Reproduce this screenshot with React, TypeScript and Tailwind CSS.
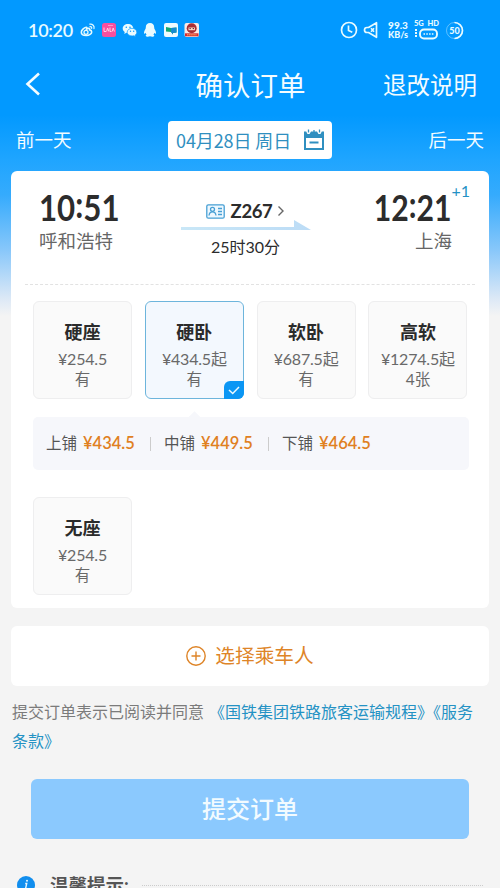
import { useState } from 'react';
import clsx from 'clsx';

interface Seat {
  name: string;
  price: string;
  left: string;
}

const seats: Seat[] = [
  { name: '硬座', price: '¥254.5', left: '有' },
  { name: '硬卧', price: '¥434.5起', left: '有' },
  { name: '软卧', price: '¥687.5起', left: '有' },
  { name: '高软', price: '¥1274.5起', left: '4张' },
];

const noSeat: Seat = { name: '无座', price: '¥254.5', left: '有' };

const berths = [
  { label: '上铺', price: '¥434.5' },
  { label: '中铺', price: '¥449.5' },
  { label: '下铺', price: '¥464.5' },
];

function NotificationIcons() {
  return (
    <svg width="120" height="16" viewBox="0 0 120 16" className="ml-[7px] shrink-0">
      {/* weibo */}
      <g fill="none" stroke="#e4faff" strokeLinecap="round">
        <path d="M6.2 5.2C4 5.7 1.3 8 1.3 10.2c0 2 2.2 3.3 5 3.3 3 0 5.4-1.7 5.4-3.6 0-1.2-1-1.8-2-2 .4-1.3-.5-2.1-3-1 .3-1 .2-1.6-.5-1.7z" strokeWidth="1.6" />
        <circle cx="6" cy="10.3" r="2" strokeWidth="1.3" />
        <path d="M9.8 2.2c2.7-.5 4.9 1.8 4.2 4.4M10 4.6c1.2-.2 2 .7 1.7 1.8" strokeWidth="1.2" />
      </g>
      {/* pink app */}
      <rect x="22" y="1" width="14" height="14" rx="2.5" fill="#f94f9f" />
      <path d="M24 5.5v4h2M26.6 9.5l1-3.5 1.2 3.5M30 5.5v4h1.5M32.2 9.5l1-3.5 1.2 3.5" stroke="#ffd2e6" strokeWidth="1" fill="none" />
      <path d="M28 3.5h5" stroke="#ff9ac7" strokeWidth="1" />
      {/* wechat */}
      <path d="M48 2c-3 0-5.3 2-5.3 4.5 0 1.5.8 2.7 2 3.5l-.4 1.9 2.1-1.1c.5.2 1 .2 1.6.2C51 11 53.3 9 53.3 6.5S51 2 48 2z" fill="#eafbff" />
      <path d="M52 6.3c2.7 0 4.8 1.8 4.8 4 0 1.2-.7 2.2-1.7 2.9l.3 1.4-1.7-.9c-.5.2-1.1.2-1.7.2-2.7 0-4.8-1.6-4.8-3.7s2.1-3.9 4.8-3.9z" fill="#eafbff" stroke="#0c9bff" strokeWidth=".7" />
      <g fill="#0c9bff">
        <circle cx="46.3" cy="5.3" r=".8" />
        <circle cx="50" cy="5.3" r=".8" />
        <circle cx="50.5" cy="9.3" r=".7" />
        <circle cx="53.7" cy="9.3" r=".7" />
      </g>
      {/* qq */}
      <path d="M70 1c-2.7 0-4.2 1.9-4.2 4.3 0 1.2-.3 1.7-.9 2.7-.8 1.3-1 2.6-.8 3.5.4.5 1-.2 1.4-.8.2.8.6 1.400 1.200 1.900-.7.3-1.100.8-.9 1.500.5 1 3 .8 4.200.2 1.200.6 3.700.8 4.200-.2.2-.7-.2-1.200-.9-1.500.6-.5 1-1.100 1.200-1.900.4.600 1 1.300 1.400.8.2-.9 0-2.200-.8-3.500-.6-1-.9-1.500-.9-2.700C74.200 2.900 72.700 1 70 1z" fill="#eafbff" />
      {/* mail card */}
      <rect x="84" y="1" width="14" height="14" rx="2" fill="#eefaff" />
      <path d="M86 5l5 1 5.5-.5v5L93 11v1.5L91 10l-5-.5z" fill="#12a873" />
      <path d="M91 6l5.5-.5v5l-3.5.5v1.5L91 10z" fill="#168bd0" />
      {/* red avatar */}
      <rect x="104.5" y="1" width="14.5" height="14" rx="2" fill="#fbe9e5" />
      <circle cx="111.7" cy="6.3" r="5" fill="#a62e36" />
      <path d="M108.5 5.500h6.400v2.700h-6.400z" fill="#ffd9c6" />
      <path d="M109.5 6.600h1.300m1.900 0h1.300" stroke="#4b2224" />
      <path d="M105 11.300h13.500v3H105z" fill="#d52c31" />
      <path d="M107 12.800h9.500" stroke="#f6bd68" strokeDasharray="1.5 .6" />
    </svg>
  );
}

function StatusBar() {
  return (
    <div className="flex h-[60px] items-center pr-[36px] pl-[28px] text-[#e9fbff]">
      <span className="w-[45px] text-[18px] leading-none font-semibold tracking-[-0.3px]">10:20</span>
      <NotificationIcons />
      <div className="ml-auto flex items-center">
        <svg width="18" height="18" viewBox="0 0 18 18" fill="none" stroke="currentColor" strokeWidth="1.7">
          <circle cx="9" cy="9" r="7.5" />
          <path d="M8.5 4.5v5l3.8 1.7" />
        </svg>
        <svg width="17" height="18" viewBox="0 0 17 18" fill="none" stroke="currentColor" strokeWidth="1.7" strokeLinejoin="round" className="ml-[5px]">
          <path d="M5.5 6.5L13.500 1.700v14.600L5.500 11.500H4a2.500 2.500 0 0 1 0-5z" />
          <path d="M8 7.200l3 3.600M11 7.200l-3 3.600" strokeWidth="1.6" />
        </svg>
        <div className="ml-[6px] w-[24px] text-center text-[9px] leading-[10px] font-black whitespace-nowrap">
          <div className="text-[10px] leading-[10px]">99.3</div>
          <div>KB/s</div>
        </div>
        <div className="ml-[4px] h-[20px] w-[26px]">
          <div className="flex justify-between pr-px text-[7.5px] leading-[8px] font-black">
            <span>5G</span>
            <span>HD</span>
          </div>
          <svg width="26" height="12" viewBox="0 0 26 12" fill="none" stroke="currentColor" className="block">
            <rect x="6" y="1.5" width="17" height="9" rx="4" strokeWidth="1.9" />
            <path d="M9.5 6h10.5" strokeWidth="1.3" strokeDasharray="1.5 1.3" />
            <path d="M2 1v8" strokeWidth="2" strokeDasharray="2 1" />
          </svg>
        </div>
        <div className="relative ml-[5px] flex size-[19px] items-center justify-center text-[9px] leading-none font-black">
          <svg width="19" height="19" viewBox="0 0 19 19" fill="none" stroke="currentColor" className="absolute inset-0">
            <circle cx="9.5" cy="9.5" r="8" strokeOpacity=".4" />
            <path d="M9.5 1.5a8 8 0 0 1 0 16" strokeWidth="1.7" />
          </svg>
          50
        </div>
      </div>
    </div>
  );
}

function Header() {
  return (
    <>
      <div className="grid h-[48px] grid-cols-[1fr_auto_1fr] items-center pr-[23px] pl-[24px] text-[#f4fcff]">
        <svg width="18" height="26" viewBox="0 0 18 26" fill="none" stroke="currentColor" strokeWidth="2.6">
          <path d="M15 2.5L3.5 13 15 23.5" />
        </svg>
        <h1 className="pt-[3px] text-[27.5px] leading-none">确认订单</h1>
        <span className="justify-self-end pt-[3px] text-[23.5px] leading-none">退改说明</span>
      </div>
      <div className="mt-[13px] flex h-[38px] items-center justify-between px-[16px] text-[18.5px] text-[#f4fcff]">
        <span className="pt-[2px]">前一天</span>
        <button className="flex h-[38px] w-[164px] items-center justify-between rounded-[4px] bg-white pr-[7px] pl-[8px] text-[#2f8fc0]">
          <span className="font-['Noto_Sans_CJK_SC',sans-serif] text-[18px] tracking-[-0.1px] whitespace-nowrap">04月28日 周日</span>
          <svg width="22" height="22" viewBox="0 0 22 22" fill="none" stroke="currentColor">
            <path d="M2 4v16h18V4" strokeWidth="2" />
            <path d="M1 2.500h2.200L4.500 5h2L8 2.500h6L15.500 5h2l1.300-2.500H21V9H1z" fill="currentColor" stroke="none" />
            <path d="M5.500 .5v3M11 1v3M16.500 .5v3" strokeWidth="1.3" />
            <path d="M6.500 13.500h9" strokeWidth="2" />
          </svg>
        </button>
        <span className="pt-[2px]">后一天</span>
      </div>
    </>
  );
}

function BigTime({ hour, minute, className }: { hour: string; minute: string; className: string }) {
  return (
    <div className={clsx('w-fit text-[35.5px] leading-[36px] font-bold', className)}>
      {hour}
      <span className="relative -top-[3px]">:</span>
      {minute}
    </div>
  );
}

function TrainInfo() {
  return (
    <div className="flex h-[113px] justify-between pr-[37px] pl-[28px] text-[#2c2c2c]">
      <div className="w-[110px] pt-[19px]">
        <BigTime hour="10" minute="51" className="origin-left scale-x-[0.88]" />
        <div className="mt-[4px] text-[18.5px] leading-[22px] text-[#666]">呼和浩特</div>
      </div>
      <div className="flex w-[130px] flex-col items-center pt-[30px]">
        <div className="flex h-[20px] items-center">
          <svg width="19" height="15" viewBox="0 0 19 15" fill="none" stroke="#479fd4" strokeWidth="1.3">
            <rect x=".8" y=".8" width="17.4" height="13.4" rx="1.5" fill="#eef8ff" />
            <circle cx="6.5" cy="5.3" r="2" />
            <path d="M3 11.5c.3-2.8 1.8-3.7 3.5-3.7s3.2.9 3.5 3.7M12 4.500h4M12 7.500h4M12 10.500h4" />
          </svg>
          <span className="ml-[6px] text-[18.5px] leading-none font-bold tracking-[-0.4px]">Z267</span>
          <svg width="8" height="12" viewBox="0 0 8 12" fill="none" stroke="#666" strokeWidth="1.4" className="ml-[5px]">
            <path d="M1.5 1.5L6 6l-4.5 4.5" />
          </svg>
        </div>
        <svg width="130" height="10" viewBox="0 0 130 10" className="-mt-px shrink-0">
          <defs>
            <linearGradient id="rail" x1="0" x2="1">
              <stop offset="0" stopColor="#c9e7f7" />
              <stop offset="1" stopColor="#bcdcf6" />
            </linearGradient>
          </defs>
          <path d="M0 7h113V0l17 10H0z" fill="url(#rail)" />
        </svg>
        <div className="mt-[7px] text-[16px] leading-[19px]">25时30分</div>
      </div>
      <div className="relative w-[110px] pt-[19px] text-right">
        <BigTime hour="12" minute="21" className="ml-auto origin-right scale-x-[0.85]" />
        <div className="mt-[4px] text-[18.5px] leading-[22px] text-[#666]">上海</div>
        <span className="absolute top-[11px] -right-[18px] text-[16px] leading-[18px] text-[#2391c5]">+1</span>
      </div>
    </div>
  );
}

function SeatCard({ seat, active, onSelect }: { seat: Seat; active: boolean; onSelect: () => void }) {
  return (
    <button
      onClick={onSelect}
      className={clsx(
        'relative flex h-[98px] w-[99px] flex-col items-center rounded-[6px] border pt-[18px]',
        active ? 'border-[#6db5dc] bg-[#f3f8fe]' : 'border-[#eeeeef] bg-[#fafafa]',
      )}
    >
      <span className="text-[18px] leading-[24px] font-bold text-[#2b2b2b]">{seat.name}</span>
      <span className="mt-[5px] text-[16px] leading-[20px] tracking-[-0.2px] whitespace-nowrap text-[#696969]">{seat.price}</span>
      <span className="text-[15.5px] leading-[20px] text-[#696969]">{seat.left}</span>
      {active && (
        <span className="absolute -right-px -bottom-px flex h-[18px] w-[20px] items-center justify-center rounded-tl-[6px] rounded-br-[6px] bg-[#0b96f4]">
          <svg width="12" height="9" viewBox="0 0 12 9" fill="none" stroke="#eaf9ff" strokeWidth="1.5">
            <path d="M1 4l3.7 3.5L11 1" />
          </svg>
        </span>
      )}
    </button>
  );
}

export default function App() {
  const [selected, setSelected] = useState('硬卧');

  return (
    <div className="h-[888px] w-[500px] overflow-hidden bg-[#f4f4f4] bg-[linear-gradient(180deg,#0299ff_0px,#0299ff_115px,#1fa5ff_160px,#35abfd_195px,#88c7fa_250px,#dbe8f6_298px,#f4f4f4_316px)] font-['Lato','Noto_Sans_CJK_SC',sans-serif]">
      <StatusBar />
      <Header />

      <section className="mx-[11px] mt-[12px] h-[437px] rounded-[6px] bg-white">
        <TrainInfo />
        <div className="mx-[14px] border-t border-dashed border-[#e2e2e2]" />

        <div className="mt-[16px] flex gap-[12.8px] pl-[22px]">
          {seats.map((seat) => (
            <SeatCard key={seat.name} seat={seat} active={selected === seat.name} onSelect={() => setSelected(seat.name)} />
          ))}
        </div>

        {/* berth prices for the selected sleeper */}
        <div className="relative mx-[22px] mt-[18px] flex h-[53px] w-[436px] items-center rounded-[5px] bg-[#f6f7fb] pl-[13px] text-[15.5px] whitespace-nowrap text-[#555]">
          <span className="absolute -top-[4px] left-[157px] size-[9px] rotate-45 bg-[#f6f7fb]" />
          {berths.map((berth, i) => (
            <div key={berth.label} className="flex items-center">
              {i > 0 && <span className="mr-[13px] ml-[14px] h-[14px] w-px bg-[#ccc]" />}
              <span>{berth.label}</span>
              <span className="ml-[6px] w-[53px] text-[16.5px] font-semibold text-[#e0801f]">{berth.price}</span>
            </div>
          ))}
        </div>

        <div className="mt-[27px] pl-[22px]">
          <SeatCard seat={noSeat} active={selected === noSeat.name} onSelect={() => setSelected(noSeat.name)} />
        </div>
      </section>

      <button className="mx-[11px] mt-[18px] flex h-[60px] w-[478px] items-center justify-center rounded-[6px] bg-white text-[#de8427]">
        <svg width="20" height="20" viewBox="0 0 20 20" fill="none" stroke="currentColor" strokeWidth="1.4">
          <circle cx="10" cy="10" r="9.2" />
          <path d="M10 5.5v9M5.5 10h9" />
        </svg>
        <span className="ml-[9px] text-[19.7px]">选择乘车人</span>
      </button>

      <p className="mt-[11px] px-[12px] text-[16px] leading-[29px] text-[#7b7b7b]">
        提交订单表示已阅读并同意
        <span className="ml-[5px] text-[#2492c4]">《国铁集团铁路旅客运输规程》《服务条款》</span>
      </p>

      <button className="mx-[31px] mt-[24px] flex h-[60px] w-[438px] items-center justify-center rounded-[6px] bg-[#8bc9fe] text-[24px] font-medium text-[#f2fbff]">
        提交订单
      </button>

      <div className="mt-[34px] flex h-[24px] items-center px-[17px]">
        <svg width="18" height="18" viewBox="0 0 18 18">
          <circle cx="9" cy="9" r="9" fill="#118eee" />
          <path d="M8.2 7.500h1.500l-1.200 5.500h1.400" stroke="#e6f6ff" strokeWidth="1.4" fill="none" />
          <circle cx="10" cy="4.8" r="1" fill="#e6f6ff" />
        </svg>
        <span className="ml-[15px] w-[82px] text-[18.5px] leading-none font-bold text-[#555]">温馨提示:</span>
        <span className="ml-[10px] flex-1 border-t border-dotted border-[#ccc]" />
      </div>
    </div>
  );
}
